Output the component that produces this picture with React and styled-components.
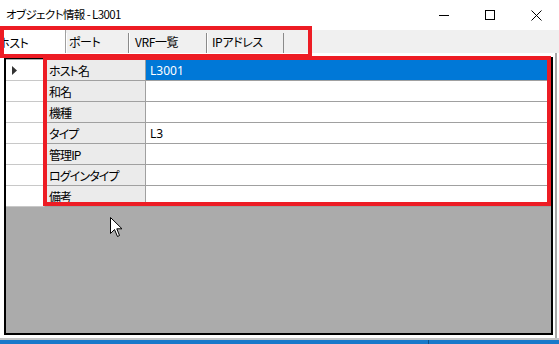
import React from "react";
import styled, { createGlobalStyle } from "styled-components";

const Global = createGlobalStyle`
  html, body { margin: 0; padding: 0; background: #fff; }
  body {
    font-family: "Noto Sans CJK JP", "Noto Sans", sans-serif;
    font-feature-settings: "palt" 1;
    font-size: 12px;
    color: #000;
  }
`;

const Window = styled.div`
  position: relative;
  width: 559px;
  height: 344px;
  display: flex;
  flex-direction: column;
  background: #fff;
  overflow: hidden;
`;

const TitleBar = styled.div`
  height: 30px;
  display: flex;
  align-items: center;
  padding-left: 6px;
`;

const Title = styled.div`
  flex: 1;
  font-size: 11.5px;
  line-height: 1;
  letter-spacing: -0.6px;
`;

const Controls = styled.div`
  display: flex;
  height: 30px;
`;

const CtrlButton = styled.div`
  width: 46px;
  height: 30px;
  display: flex;
  align-items: center;
  justify-content: center;
`;

const TabStrip = styled.div`
  height: 23px;
  background: #f0f0f0;
  display: flex;
  align-items: stretch;
  overflow: hidden;
`;

const Tab = styled.div`
  width: ${(p) => p.$w}px;
  flex: none;
  box-sizing: border-box;
  display: flex;
  align-items: center;
  padding-left: ${(p) => p.$pad}px;
  background: ${(p) => (p.$active ? "#fff" : "#f0f0f0")};
  border-right: 1px solid ${(p) => (p.$active ? "#a0a0a0" : "#8a8a8a")};
  border-left: ${(p) => (p.$active ? "none" : "1px solid #fff")};
  margin-top: ${(p) => (p.$active ? "0" : "3px")};
  font-size: 12px;
  letter-spacing: -0.4px;
  white-space: nowrap;
  overflow: hidden;
`;

const TabLabel = styled.span`
  margin-left: ${(p) => (p.$clip ? "-2px" : "0")};
  margin-top: ${(p) => (p.$active ? "1px" : "-3px")};
`;

const Content = styled.div`
  flex: 1;
  display: flex;
  padding: 4px 2px 3px 4px;
  margin-right: 2px;
  border-right: 2px solid #a8a8a8;
`;

const GridFrame = styled.div`
  flex: 1;
  border: 2px solid #000;
  background: #ababab;
  display: flex;
  flex-direction: column;
  padding-top: 1px;
`;

const Row = styled.div`
  display: flex;
  height: 21px;
`;

const RowHeader = styled.div`
  width: 39px;
  flex: none;
  box-sizing: border-box;
  background: #fff;
  border-right: 1px solid #a0a0a0;
  border-bottom: 1px solid #c8c8c8;
  display: flex;
  align-items: center;
  padding-left: 6px;
`;

const NameCell = styled.div`
  width: 101px;
  flex: none;
  box-sizing: border-box;
  background: #ebebeb;
  border-right: 1px solid #a0a0a0;
  border-bottom: 1px solid #a0a0a0;
  padding-left: 4px;
  display: flex;
  align-items: center;
  white-space: nowrap;
  overflow: hidden;
  letter-spacing: -0.9px;
`;

const ValueCell = styled.div`
  flex: 1;
  box-sizing: border-box;
  background: ${(p) => (p.$selected ? "#0078d7" : "#fff")};
  color: ${(p) => (p.$selected ? "#fff" : "#000")};
  border-bottom: 1px solid #a0a0a0;
  padding-left: 4px;
  display: flex;
  align-items: center;
  font-family: "Noto Sans", "Noto Sans CJK JP", sans-serif;
`;

const BottomEdge = styled.div`
  height: 2px;
  background: #c4c4c4;
`;

const Taskbar = styled.div`
  height: 4px;
  background: #1979ca;
  display: flex;
`;

const TaskGap = styled.div`
  width: 1px;
  margin-left: 428px;
  background: #0f4f86;
`;

const Highlight = styled.div`
  position: absolute;
  left: ${(p) => p.$x}px;
  top: ${(p) => p.$y}px;
  width: ${(p) => p.$w}px;
  height: ${(p) => p.$h}px;
  box-sizing: border-box;
  border: 4px solid #ed1c24;
  pointer-events: none;
`;

const Cursor = styled.svg`
  position: absolute;
  left: 110px;
  top: 217px;
`;

const rows = [
  { name: "ホスト名", value: "L3001", selected: true },
  { name: "和名", value: "" },
  { name: "機種", value: "" },
  { name: "タイプ", value: "L3" },
  { name: "管理IP", value: "" },
  { name: "ログインタイプ", value: "" },
  { name: "備考", value: "" },
];

const tabs = [
  { label: "ホスト", w: 66, pad: 0, active: true, clip: true },
  { label: "ポート", w: 63, pad: 2 },
  { label: "VRF一覧", w: 78, pad: 5 },
  { label: "IPアドレス", w: 77, pad: 4 },
];

export default function App() {
  return (
    <>
      <Global />
      <Window>
        <TitleBar>
          <Title>オブジェクト情報 - L3001</Title>
          <Controls>
            <CtrlButton>
              <svg width="10" height="10" viewBox="0 0 10 10">
                <rect x="0" y="5" width="10" height="1" fill="#000" />
              </svg>
            </CtrlButton>
            <CtrlButton>
              <svg width="10" height="10" viewBox="0 0 10 10">
                <rect x="0.5" y="0.5" width="9" height="9" fill="none" stroke="#000" strokeWidth="1" />
              </svg>
            </CtrlButton>
            <CtrlButton>
              <svg width="11" height="11" viewBox="0 0 11 11">
                <path d="M0.5 0.5 L10.5 10.5 M10.5 0.5 L0.5 10.5" stroke="#000" strokeWidth="1" />
              </svg>
            </CtrlButton>
          </Controls>
        </TitleBar>
        <TabStrip>
          {tabs.map((t) => (
            <Tab key={t.label} $w={t.w} $pad={t.pad} $active={t.active}>
              <TabLabel $clip={t.clip} $active={t.active}>{t.label}</TabLabel>
            </Tab>
          ))}
        </TabStrip>
        <Content>
          <GridFrame>
            {rows.map((r) => (
              <Row key={r.name}>
                <RowHeader>
                  {r.selected && (
                    <svg width="6" height="9" viewBox="0 0 6 9">
                      <path d="M0 0 L5 4.5 L0 9 Z" fill="#333" />
                    </svg>
                  )}
                </RowHeader>
                <NameCell>{r.name}</NameCell>
                <ValueCell $selected={r.selected}>{r.value}</ValueCell>
              </Row>
            ))}
          </GridFrame>
        </Content>
        <BottomEdge />
        <Taskbar>
          <TaskGap />
        </Taskbar>
        <Highlight $x={0} $y={26} $w={312} $h={32} />
        <Highlight $x={43} $y={56} $w={508} $h={150} />
        <Cursor width="13" height="21" viewBox="0 0 13 21">
          <path
            d="M0.5 0.5 L0.5 16.5 L4.5 12.5 L7.5 19.5 L9.5 18.5 L6.8 11.8 L12 11.8 Z"
            fill="#fff"
            stroke="#000"
            strokeWidth="1"
            strokeLinejoin="miter"
          />
        </Cursor>
      </Window>
    </>
  );
}
